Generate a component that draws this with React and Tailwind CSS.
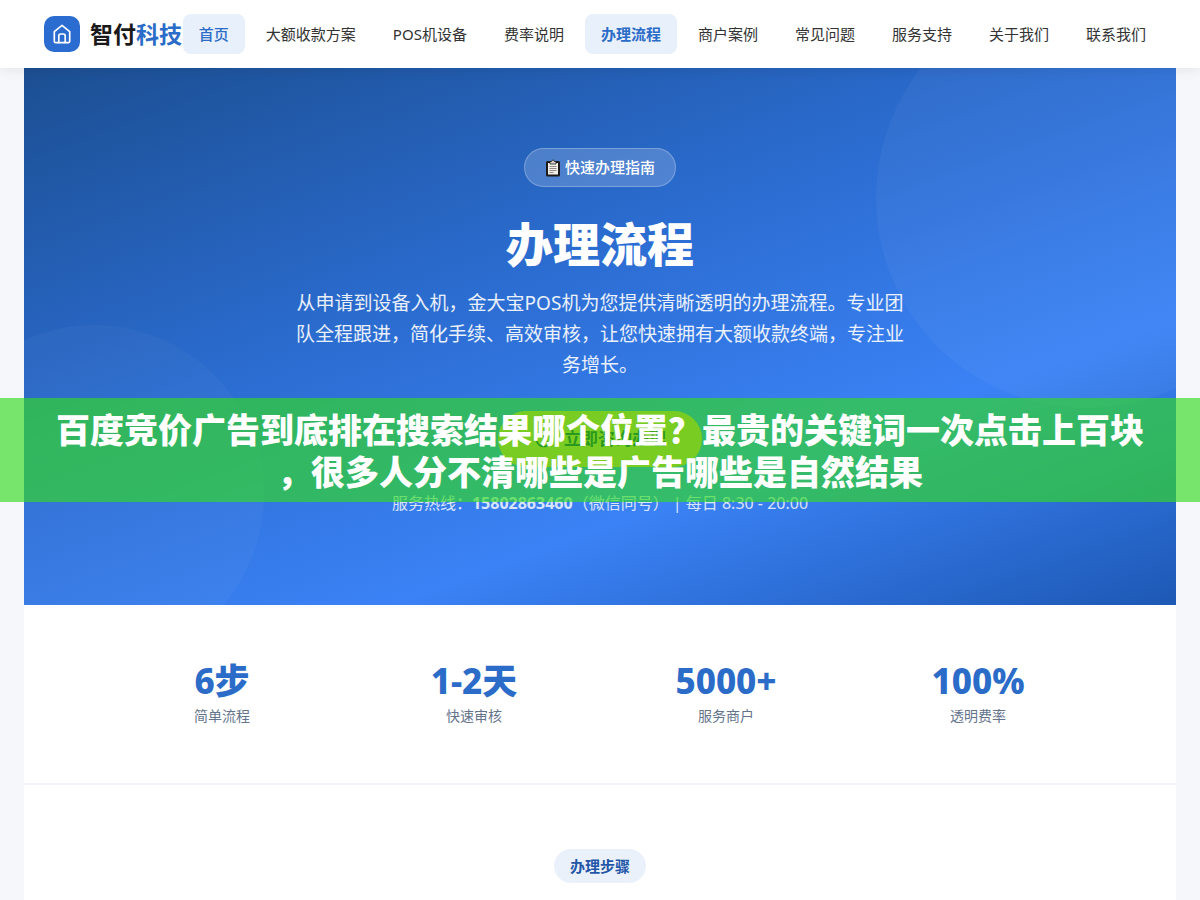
import { MdAccessTime } from "react-icons/md";

const NAV_ITEMS = [
  { label: "首页", active: true },
  { label: "大额收款方案" },
  { label: "POS机设备" },
  { label: "费率说明" },
  { label: "办理流程", active: true, current: true },
  { label: "商户案例" },
  { label: "常见问题" },
  { label: "服务支持" },
  { label: "关于我们" },
  { label: "联系我们" },
];

const STATS = [
  { value: "6步", label: "简单流程" },
  { value: "1-2天", label: "快速审核" },
  { value: "5000+", label: "服务商户" },
  { value: "100%", label: "透明费率" },
];

function HomeIcon() {
  return (
    <svg viewBox="0 0 20 20" className="w-5 h-5" fill="none" stroke="white" strokeWidth="1.7" strokeLinejoin="round" strokeLinecap="round" aria-hidden="true">
      <path d="M2.3 7.6 10 1.3l7.7 6.3v9.6a1.4 1.4 0 0 1-1.4 1.4H3.7a1.4 1.4 0 0 1-1.4-1.4z" />
      <path d="M6.8 18.4v-6.6a1.8 1.8 0 0 1 1.8-1.8h2.8a1.8 1.8 0 0 1 1.8 1.8v6.6" />
    </svg>
  );
}

function ClipboardIcon() {
  return (
    <svg viewBox="0 0 16 18" className="w-4 h-[18px]" aria-hidden="true">
      <rect x="1" y="2" width="14" height="15.5" rx="1.5" fill="#1b1b1b" />
      <rect x="3" y="4" width="10" height="11.5" fill="#f3efe9" />
      <path d="M5 5V2.5h1.6a1.4 1.4 0 0 1 2.8 0H11V5z" fill="#d8d4cf" stroke="#1b1b1b" strokeWidth="0.8" />
      <path d="M4.5 7.5h7M4.5 9.5h7M4.5 11.5h7M4.5 13.5h4" stroke="#77716b" strokeWidth="0.8" />
    </svg>
  );
}

function Header() {
  return (
    <header className="relative z-10 bg-white shadow-[0_2px_12px_rgba(0,0,0,0.08)]">
      <div className="flex items-center justify-between h-[68px] pl-11 pr-[38px]">
        <a href="#" className="flex items-center gap-2.5 shrink-0">
          <span className="flex items-center justify-center w-9 h-9 rounded-[10px] bg-[#2b6cd0]">
            <HomeIcon />
          </span>
          <span className="text-[23px] leading-9 font-bold text-[#1a1a1a] whitespace-nowrap">
            智付<span className="text-[#2b6cc8]">科技</span>
          </span>
        </a>
        <nav className="flex items-center gap-[5px]">
          {NAV_ITEMS.map((item) => (
            <a
              key={item.label}
              href="#"
              className={`px-4 py-2 rounded-lg text-[15px] leading-6 whitespace-nowrap ${
                item.active ? "bg-[#e8f0fb] text-[#2b6cc8]" : "text-[#333333]"
              } ${item.current ? "font-bold" : item.active ? "font-medium" : "font-normal"}`}
            >
              {item.label}
            </a>
          ))}
        </nav>
      </div>
    </header>
  );
}

function Hero() {
  return (
    <section className="relative overflow-hidden flex flex-col items-center px-6 pt-20 pb-[89px] text-center text-white bg-[linear-gradient(160deg,#1c4f92_0%,#2b6cd0_40%,#3b82f6_70%,#1d58b4_100%)]">
      {/* Decorative circles */}
      <div className="absolute -top-20 -right-[120px] w-[420px] h-[420px] rounded-full bg-white/4" />
      <div className="absolute -bottom-[60px] -left-[100px] w-[340px] h-[340px] rounded-full bg-white/3" />

      <div className="flex items-center gap-1 px-5 py-2 rounded-full border border-white/25 bg-white/18 text-[15px] leading-[21px] font-medium">
        <ClipboardIcon />
        快速办理指南
      </div>
      <h1 className="mt-7 text-[47px] leading-[58px] font-extrabold">办理流程</h1>
      <p className="mt-[15px] max-w-[620px] text-[19px] leading-[31px] text-white/90">
        从申请到设备入机，金大宝POS机为您提供清晰透明的办理流程。专业团队全程跟进，简化手续、高效审核，让您快速拥有大额收款终端，专注业务增长。
      </p>
      <button
        type="button"
        className="mt-[30px] flex items-center gap-2.5 px-9 h-14 rounded-full bg-[#fbb024] text-[#1a1a1a] text-[17px] font-bold"
      >
        <MdAccessTime size={20} />
        立即咨询办理
      </button>
      <p className="mt-[23px] text-[16px] leading-[26px] text-white/80">
        服务热线：<strong className="font-bold">15802863460</strong>（微信同号） | 每日 8:30 - 20:00
      </p>
    </section>
  );
}

function Stats() {
  return (
    <section className="px-6 pt-[53px] pb-[55px] border-b-2 border-[#f1f4f8]">
      <div className="grid grid-cols-4 max-w-[1008px] mx-auto text-center">
        {STATS.map((stat) => (
          <div key={stat.label}>
            <div className="text-[35px] leading-[46px] font-extrabold text-[#2b6cc8]">{stat.value}</div>
            <div className="text-[14px] leading-6 text-[#64748b]">{stat.label}</div>
          </div>
        ))}
      </div>
    </section>
  );
}

export default function App() {
  return (
    <div className="relative flex flex-col min-h-screen overflow-hidden bg-[#f5f7fa] font-['Noto_Sans','Noto_Sans_CJK_SC',sans-serif]" lang="zh-CN">
      <Header />
      <main className="flex-1 mx-6 bg-white">
        <Hero />
        <Stats />
        <section className="flex flex-col items-center pt-16">
          <h2 className="px-4 py-1.5 rounded-full bg-[#ebf1fb] text-[15px] leading-[22px] font-bold text-[#2456a8]">办理步骤</h2>
        </section>
      </main>

      {/* Promo banner on top of the page */}
      <div className="absolute inset-x-0 top-[398px] z-20 pt-[11px] pb-[9px] bg-[#32dc21]/65 text-center text-white text-[34px] leading-[42px] font-black">
        <span className="block">百度竞价广告到底排在搜索结果哪个位置？最贵的关键词一次点击上百块</span>
        <span className="block">，很多人分不清哪些是广告哪些是自然结果</span>
      </div>
    </div>
  );
}
